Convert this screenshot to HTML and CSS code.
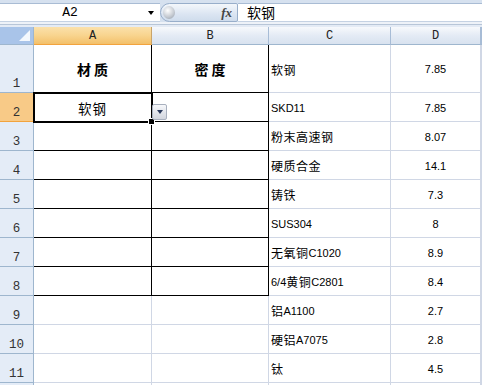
FILE: index.html
```html
<!DOCTYPE html>
<html>
<head>
<meta charset="utf-8">
<link rel="stylesheet" href="styles.css">
</head>
<body>
<div class="app">
  <div class="fbar">
    <div class="namebox"><span class="ref">A2</span><span class="nb-arrow"></span></div>
    <div class="fxpill"><span class="knob"></span><span class="fx">fx</span></div>
    <div class="finput">软钢</div>
  </div>
  <div class="fgap"></div>
  <div class="sheet">
    <div class="corner"><span class="tri"></span></div>
    <div class="ch sel">A</div>
    <div class="ch">B</div>
    <div class="ch">C</div>
    <div class="ch">D</div>
    <div class="ch"></div>

    <div class="rh">1</div>
    <div class="c bx head">材质</div>
    <div class="c bx head">密度</div>
    <div class="c l"><span class="cn">软钢</span></div>
    <div class="c m">7.85</div>
    <div class="c"></div>

    <div class="rh sel">2</div>
    <div class="c bx cur"><span class="cnb">软钢</span></div>
    <div class="c bx"></div>
    <div class="c l">SKD11</div>
    <div class="c m">7.85</div>
    <div class="c"></div>

    <div class="rh">3</div>
    <div class="c bx"></div>
    <div class="c bx"></div>
    <div class="c l"><span class="cn">粉末高速钢</span></div>
    <div class="c m">8.07</div>
    <div class="c"></div>

    <div class="rh">4</div>
    <div class="c bx"></div>
    <div class="c bx"></div>
    <div class="c l"><span class="cn">硬质合金</span></div>
    <div class="c m">14.1</div>
    <div class="c"></div>

    <div class="rh">5</div>
    <div class="c bx"></div>
    <div class="c bx"></div>
    <div class="c l"><span class="cn">铸铁</span></div>
    <div class="c m">7.3</div>
    <div class="c"></div>

    <div class="rh">6</div>
    <div class="c bx"></div>
    <div class="c bx"></div>
    <div class="c l">SUS304</div>
    <div class="c m">8</div>
    <div class="c"></div>

    <div class="rh">7</div>
    <div class="c bx"></div>
    <div class="c bx"></div>
    <div class="c l"><span class="cn">无氧铜</span>C1020</div>
    <div class="c m">8.9</div>
    <div class="c"></div>

    <div class="rh">8</div>
    <div class="c bx"></div>
    <div class="c bx"></div>
    <div class="c l">6/4<span class="cn">黄铜</span>C2801</div>
    <div class="c m">8.4</div>
    <div class="c"></div>

    <div class="rh">9</div>
    <div class="c"></div>
    <div class="c"></div>
    <div class="c l"><span class="cn">铝</span>A1100</div>
    <div class="c m">2.7</div>
    <div class="c"></div>

    <div class="rh">10</div>
    <div class="c"></div>
    <div class="c"></div>
    <div class="c l"><span class="cn">硬铝</span>A7075</div>
    <div class="c m">2.8</div>
    <div class="c"></div>

    <div class="rh">11</div>
    <div class="c"></div>
    <div class="c"></div>
    <div class="c l"><span class="cn">钛</span></div>
    <div class="c m">4.5</div>
    <div class="c"></div>

    <div class="rh"></div>
    <div class="c"></div>
    <div class="c"></div>
    <div class="c"></div>
    <div class="c"></div>
    <div class="c"></div>

    <div class="selbox"><span class="handle"></span></div>
    <div class="ddbtn"><span class="ddtri"></span></div>
  </div>
</div>
</body>
</html>
```

FILE: styles.css
```css
html, body {
  margin: 0;
  padding: 0;
  background: #ffffff;
  overflow: hidden;
}
.app {
  width: 482px;
  height: 385px;
  overflow: hidden;
  font-family: "Liberation Sans", "Noto Sans CJK SC", sans-serif;
}
.fbar {
  height: 19px;
  padding-top: 3px;
  display: flex;
  background: #d6e1ef;
}
.namebox {
  width: 160px;
  box-sizing: border-box;
  background: #ffffff;
  border-top: 1px solid #a9bcd4;
  border-bottom: 1px solid #c5d2e3;
  display: flex;
  align-items: center;
  position: relative;
}
.ref {
  width: 140px;
  text-align: center;
  font-family: "Liberation Mono", monospace;
  font-size: 13px;
  color: #000;
}
.nb-arrow {
  width: 0;
  height: 0;
  border-left: 3.5px solid transparent;
  border-right: 3.5px solid transparent;
  border-top: 4px solid #000;
  margin-left: 8px;
}
.fxpill {
  width: 78px;
  box-sizing: border-box;
  display: flex;
  align-items: center;
  justify-content: space-between;
  background: linear-gradient(#f4f7fb, #dbe5f2 60%, #cfdcec);
  border: 1px solid #98aeca;
  border-radius: 10px 2px 2px 10px;
  padding: 0 5px 0 2px;
}
.knob {
  width: 12px;
  height: 13px;
  border-radius: 50%;
  background: radial-gradient(circle at 40% 35%, #ffffff, #c7ccd3 55%, #8f98a4);
}
.fx {
  font-family: "Liberation Serif", serif;
  font-style: italic;
  font-weight: bold;
  font-size: 13px;
  color: #444;
}
.finput {
  flex: 1;
  box-sizing: border-box;
  background: #ffffff;
  border-top: 1px solid #a9bcd4;
  border-bottom: 1px solid #c5d2e3;
  padding-left: 9px;
  font-size: 14px;
  line-height: 17px;
  font-family: "Noto Sans CJK SC", sans-serif;
  color: #000;
}
.fgap {
  height: 5px;
  background: linear-gradient(#eef2f8 0, #eef2f8 2px, #b8c6d8 2px, #b8c6d8 3px, #e4ebf5 3px);
}
.sheet {
  display: grid;
  grid-template-columns: 34px 118px 117px 122px 90px 1fr;
  grid-template-rows: 18px 48px repeat(11, 29px);
  position: relative;
}
.sheet > div {
  box-sizing: border-box;
}
.corner {
  background: #a9c4e9;
  border-right: 1px solid #9eb6ce;
  border-bottom: 1px solid #9eb6ce;
  position: relative;
}
.tri {
  position: absolute;
  right: 3px;
  bottom: 3px;
  width: 0;
  height: 0;
  border-left: 11px solid transparent;
  border-bottom: 11px solid #f4f8fd;
}
.ch {
  background: linear-gradient(#f7f9fc, #e4ebf5 50%, #d8e2ef);
  border-right: 1px solid #a7bcd6;
  border-bottom: 1px solid #9eb6ce;
  display: flex;
  align-items: center;
  justify-content: center;
  font-family: "Liberation Mono", monospace;
  font-size: 12px;
  color: #222;
}
.ch.sel {
  background: linear-gradient(#fbe1ab, #f8d48e 50%, #f3c06a);
  border-bottom: 1px solid #f2a33d;
  border-right: 1px solid #c9a46a;
}
.rh {
  background: #e4ecf7;
  border-right: 1px solid #9eb6ce;
  border-bottom: 1px solid #9eb6ce;
  display: flex;
  align-items: flex-end;
  justify-content: center;
  padding-bottom: 1px;
  font-family: "Liberation Mono", monospace;
  font-size: 12.5px;
  line-height: 14px;
  color: #333;
}
.rh.sel {
  background: #f8ca87;
  border-bottom: 1px solid #f2a33d;
  border-right: 1px solid #f2a33d;
}
.c {
  background: #ffffff;
  border-right: 1px solid #d0d7e5;
  border-bottom: 1px solid #d0d7e5;
  display: flex;
  align-items: center;
  font-size: 11px;
  color: #000;
}
.c.bx {
  border-right: 1px solid #000;
  border-bottom: 1px solid #000;
  justify-content: center;
}
.c.head {
  font-family: "Noto Sans CJK SC", sans-serif;
  font-weight: bold;
  font-size: 14px;
  letter-spacing: 3px;
  padding-left: 3px;
}
.c.l {
  padding-left: 2px;
  padding-top: 1px;
}
.c.m {
  justify-content: center;
  padding-top: 1px;
}
.cn {
  font-family: "Noto Sans CJK SC", sans-serif;
  font-size: 12px;
  letter-spacing: 0.5px;
}
.cnb {
  font-family: "Noto Sans CJK SC", sans-serif;
  font-size: 13.5px;
  letter-spacing: 1px;
  padding-top: 2px;
}
.selbox {
  position: absolute;
  left: 33px;
  top: 65px;
  width: 120px;
  height: 31px;
  border: 2px solid #000;
  box-sizing: border-box;
  pointer-events: none;
}
.handle {
  position: absolute;
  right: -4px;
  bottom: -4px;
  width: 5px;
  height: 5px;
  background: #000;
  border: 1px solid #fff;
}
.ddbtn {
  position: absolute;
  left: 152px;
  top: 77px;
  width: 15px;
  height: 16px;
  box-sizing: border-box;
  border: 1px solid #a8b0be;
  border-radius: 2px;
  background: linear-gradient(#f7f8fb, #e3e6ec 50%, #d2d6de);
  display: flex;
  align-items: center;
  justify-content: center;
}
.ddtri {
  width: 0;
  height: 0;
  border-left: 3.5px solid transparent;
  border-right: 3.5px solid transparent;
  border-top: 4px solid #2a3a5c;
}
```
